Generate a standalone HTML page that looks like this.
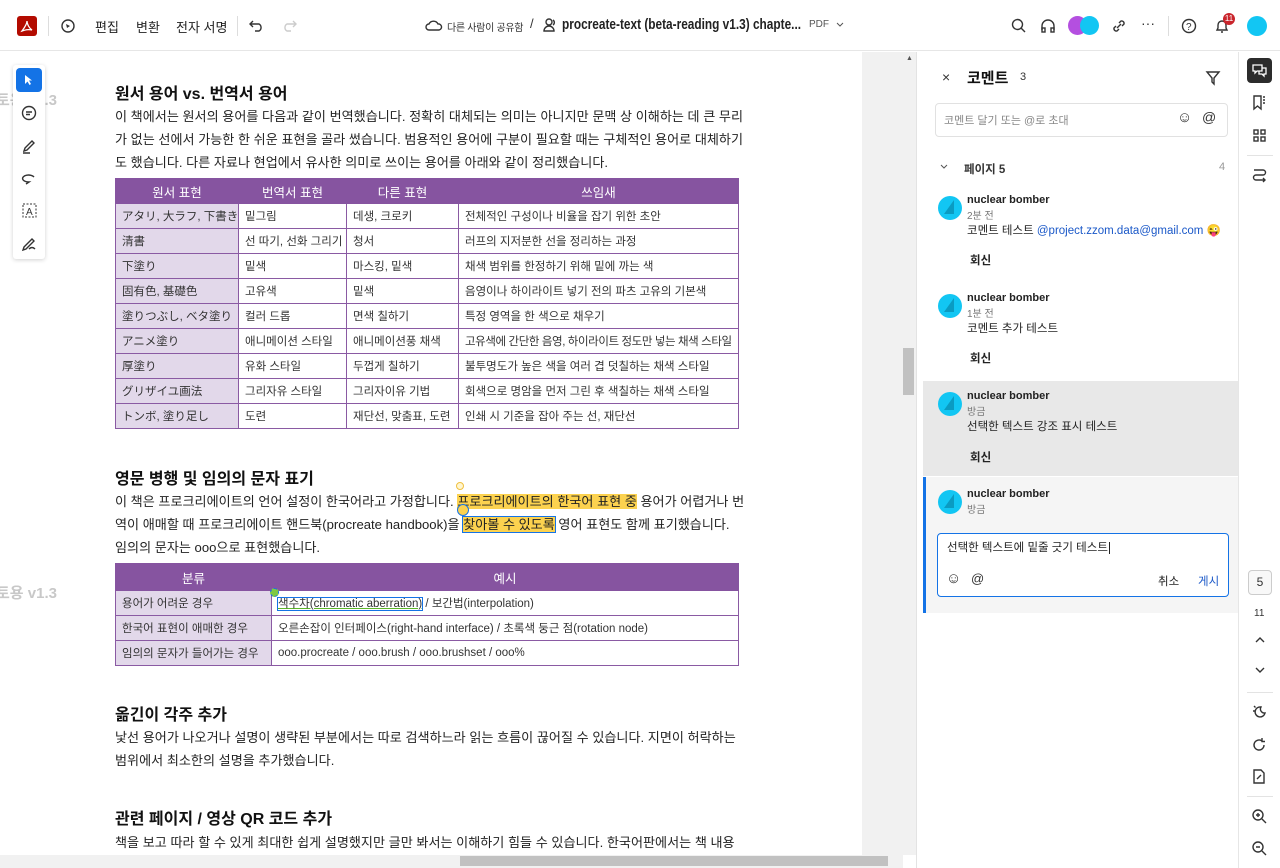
<!DOCTYPE html>
<html><head><meta charset="utf-8">
<style>
*{margin:0;padding:0;box-sizing:border-box}
body{width:1280px;height:868px;overflow:hidden;background:#fff;font-family:"Liberation Sans","Noto Sans CJK KR",sans-serif;color:#222;position:relative}
.a{position:absolute}
.top{left:0;top:0;width:1280px;height:51px;border-bottom:1px solid #e6e6e6;background:#fff}
.tb{font-size:13px;color:#222;top:17px}
p.t{position:absolute;left:115px;width:625px;font-size:13.1px;line-height:23px;color:#222;white-space:nowrap}
h2{position:absolute;left:115px;font-size:16px;font-weight:bold;color:#111}
table{position:absolute;border-collapse:collapse;font-size:11.5px;color:#333;table-layout:fixed}
td,th{border:1px solid #8a5aa3;height:25px;padding:0 6px;white-space:nowrap;overflow:hidden}
th{background:#8654a0;color:#fff;font-weight:normal;font-size:12.5px;text-align:center;border-color:#8654a0}
td.f{background:#e2d8ea}
.hl{background:#fcd24f}
.wm{color:#c8c8c8;font-weight:bold;font-size:15px}
.ic{stroke:#333;fill:none;stroke-width:1.4}
.panel{left:916px;top:52px;width:322px;height:816px;background:#fff;border-left:1px solid #e3e3e3}
.name{font-size:11px;font-weight:bold;color:#222}
.time{font-size:10px;color:#777}
.ct{font-size:11.5px;color:#222}
.av{width:24px;height:24px;border-radius:50%;background:#12c6f3;overflow:hidden}
.av:after{content:"";position:absolute;left:6px;top:4px;border-left:10px solid transparent;border-bottom:14px solid #0a9bc2}
.rep{font-size:11.5px;font-weight:bold;color:#222}
</style></head><body>

<div class="a top"></div>
<div class="a" style="left:17px;top:16px;width:20px;height:20px;background:#b30b00;border-radius:3px"></div>
<svg class="a" style="left:20px;top:19px" width="14" height="14"><path d="M2 12 C5 8 7 4 7 2 C7 5 9 9 12 11 C8 10 5 11 2 12Z" fill="none" stroke="#fff" stroke-width="1.3"/></svg>
<div class="a" style="left:48px;top:16px;width:1px;height:20px;background:#ddd"></div>
<svg class="a" style="left:60px;top:18px" width="16" height="16"><circle cx="8" cy="8" r="6" class="ic"/><path d="M6 6 L10 8 L7 10Z" fill="#333"/></svg>
<div class="a tb" style="left:95px">편집</div>
<div class="a tb" style="left:136px">변환</div>
<div class="a tb" style="left:176px">전자 서명</div>
<div class="a" style="left:237px;top:16px;width:1px;height:20px;background:#ddd"></div>
<svg class="a" style="left:249px;top:18px" width="16" height="14"><path d="M4 3 L1 6 L4 9 M1 6 H10 A4 4 0 0 1 10 13 H6" class="ic"/></svg>
<svg class="a" style="left:281px;top:18px" width="16" height="14"><path d="M12 3 L15 6 L12 9 M15 6 H6 A4 4 0 0 0 6 13 H10" stroke="#ccc" fill="none" stroke-width="1.4"/></svg>
<svg class="a" style="left:425px;top:18px" width="18" height="14"><path d="M4 12 H14 A3 3 0 0 0 13 6 A5 5 0 0 0 4 6 A3 3 0 0 0 4 12Z" class="ic"/></svg>
<div class="a" style="left:447px;top:19px;font-size:10px;color:#333;letter-spacing:-0.3px">다른 사람이 공유함</div>
<div class="a" style="left:530px;top:16px;font-size:13px;color:#333">/</div>
<svg class="a" style="left:542px;top:17px" width="16" height="16"><circle cx="7" cy="5" r="3" class="ic"/><path d="M2 14 A5 5 0 0 1 12 14Z" class="ic"/><path d="M11 3 A3 3 0 0 1 11 8" class="ic"/></svg>
<div class="a" style="left:562px;top:16px;font-size:15px;font-weight:bold;color:#222;transform:scaleX(0.79);transform-origin:left;white-space:nowrap">procreate-text (beta-reading v1.3) chapte...</div>
<div class="a" style="left:809px;top:19px;font-size:10px;color:#555">PDF</div>
<svg class="a" style="left:835px;top:21px" width="10" height="8"><path d="M2 2 L5 5 L8 2" stroke="#555" fill="none"/></svg>
<svg class="a" style="left:1011px;top:18px" width="16" height="16"><circle cx="6.5" cy="6.5" r="5" class="ic"/><path d="M10 10 L14 14" class="ic"/></svg>
<svg class="a" style="left:1040px;top:18px" width="16" height="16"><path d="M2 12 V8 A6 6 0 0 1 14 8 V12" class="ic"/><rect x="2" y="10" width="3" height="4" class="ic"/><rect x="11" y="10" width="3" height="4" class="ic"/></svg>
<div class="a" style="left:1068px;top:16px;width:19px;height:19px;border-radius:50%;background:#b44fe0"></div>
<div class="a" style="left:1080px;top:16px;width:19px;height:19px;border-radius:50%;background:#12c6f3"></div>
<svg class="a" style="left:1111px;top:18px" width="16" height="16"><path d="M6 10 L10 6 M5 8 L3 10 A2.5 2.5 0 0 0 6 13 L8 11 M8 5 L10 3 A2.5 2.5 0 0 1 13 6 L11 8" class="ic"/></svg>
<div class="a" style="left:1141px;top:15px;font-size:14px;color:#333">···</div>
<div class="a" style="left:1168px;top:16px;width:1px;height:20px;background:#ddd"></div>
<svg class="a" style="left:1181px;top:18px" width="16" height="16"><circle cx="8" cy="8" r="6.5" class="ic"/><text x="5" y="12" font-size="10" fill="#333" font-family="Liberation Sans">?</text></svg>
<svg class="a" style="left:1214px;top:18px" width="16" height="16"><path d="M3 12 H13 L12 10 V7 A4 4 0 0 0 4 7 V10Z M7 14 H9" class="ic"/></svg>
<div class="a" style="left:1223px;top:13px;width:12px;height:12px;border-radius:50%;background:#c9252c;color:#fff;font-size:8px;text-align:center;line-height:12px">11</div>
<div class="a" style="left:1247px;top:16px;width:20px;height:20px;border-radius:50%;background:#12c6f3"></div>

<div class="a" style="left:862px;top:52px;width:54px;height:803px;background:#f1f1f1"></div>
<div class="a" style="left:903px;top:52px;width:13px;height:803px;background:#f1f1f1"></div>
<div class="a" style="left:903px;top:348px;width:11px;height:47px;background:#c1c1c1"></div>
<div class="a" style="left:906px;top:55px;font-size:7px;color:#555">▲</div>
<div class="a" style="left:0;top:855px;width:903px;height:13px;background:#f1f1f1"></div>
<div class="a" style="left:460px;top:856px;width:428px;height:10px;background:#c1c1c1"></div>
<div class="a" style="left:917px;top:448px;width:3px;height:22px;background:#555"></div>

<div class="a wm" style="left:-4px;top:89px">토용 v1.3</div>
<div class="a wm" style="left:-4px;top:582px">토용 v1.3</div>

<div class="a" style="left:13px;top:65px;width:32px;height:194px;background:#fff;box-shadow:0 1px 4px rgba(0,0,0,.18);border-radius:3px"></div>
<div class="a" style="left:16px;top:68px;width:26px;height:24px;background:#1473e6;border-radius:4px"></div>
<svg class="a" style="left:22px;top:73px" width="14" height="14"><path d="M3 2 L3 11 L5.5 8.5 L7.5 12 L9 11 L7 7.5 L10 7.5Z" fill="#fff"/></svg>
<svg class="a" style="left:20px;top:104px" width="20" height="20"><circle cx="9" cy="9" r="6.5" class="ic"/><path d="M6 8 H12 M6 10.5 H10" class="ic"/></svg>
<svg class="a" style="left:20px;top:137px" width="20" height="20"><path d="M4 14 L5 11 L12 4 L14 6 L7 13Z M3 16 H10" class="ic"/></svg>
<svg class="a" style="left:20px;top:170px" width="20" height="20"><path d="M14 7 A6 3.5 0 1 0 9 12 L6 14" class="ic"/></svg>
<svg class="a" style="left:20px;top:201px" width="20" height="20"><rect x="3" y="3" width="13" height="13" stroke="#333" fill="none" stroke-dasharray="2 1.5"/><text x="6" y="14" font-size="10" fill="#333" font-family="Liberation Sans">A</text></svg>
<svg class="a" style="left:20px;top:234px" width="20" height="20"><path d="M4 13 L12 5 L14 7 L6 15 L3 16Z M9 15 Q12 12 15 15" class="ic"/></svg>

<h2 style="top:80px">원서 용어 vs. 번역서 용어</h2>
<p class="t" style="top:105px">이 책에서는 원서의 용어를 다음과 같이 번역했습니다. 정확히 대체되는 의미는 아니지만 문맥 상 이해하는 데 큰 무리<br>가 없는 선에서 가능한 한 쉬운 표현을 골라 썼습니다. 범용적인 용어에 구분이 필요할 때는 구체적인 용어로 대체하기<br>도 했습니다. 다른 자료나 현업에서 유사한 의미로 쓰이는 용어를 아래와 같이 정리했습니다.</p>

<table style="left:115px;top:178px;width:623px">
<colgroup><col style="width:123px"><col style="width:108px"><col style="width:112px"><col style="width:280px"></colgroup>
<tr><th>원서 표현</th><th>번역서 표현</th><th>다른 표현</th><th>쓰임새</th></tr>
<tr><td class="f">アタリ, 大ラフ, 下書き</td><td>밑그림</td><td>데생, 크로키</td><td>전체적인 구성이나 비율을 잡기 위한 초안</td></tr>
<tr><td class="f">清書</td><td>선 따기, 선화 그리기</td><td>청서</td><td>러프의 지저분한 선을 정리하는 과정</td></tr>
<tr><td class="f">下塗り</td><td>밑색</td><td>마스킹, 밑색</td><td>채색 범위를 한정하기 위해 밑에 까는 색</td></tr>
<tr><td class="f">固有色, 基礎色</td><td>고유색</td><td>밑색</td><td>음영이나 하이라이트 넣기 전의 파츠 고유의 기본색</td></tr>
<tr><td class="f">塗りつぶし, ベタ塗り</td><td>컬러 드롭</td><td>면색 칠하기</td><td>특정 영역을 한 색으로 채우기</td></tr>
<tr><td class="f">アニメ塗り</td><td>애니메이션 스타일</td><td>애니메이션풍 채색</td><td style="letter-spacing:-0.4px">고유색에 간단한 음영, 하이라이트 정도만 넣는 채색 스타일</td></tr>
<tr><td class="f">厚塗り</td><td>유화 스타일</td><td>두껍게 칠하기</td><td>불투명도가 높은 색을 여러 겹 덧칠하는 채색 스타일</td></tr>
<tr><td class="f">グリザイユ画法</td><td>그리자유 스타일</td><td>그리자이유 기법</td><td>회색으로 명암을 먼저 그린 후 색칠하는 채색 스타일</td></tr>
<tr><td class="f">トンボ, 塗り足し</td><td>도련</td><td>재단선, 맞춤표, 도련</td><td>인쇄 시 기준을 잡아 주는 선, 재단선</td></tr>
</table>

<h2 style="top:465px">영문 병행 및 임의의 문자 표기</h2>
<p class="t" style="top:490px">이 책은 프로크리에이트의 언어 설정이 한국어라고 가정합니다. <span class="hl">프로크리에이트의 한국어 표현 중</span> 용어가 어렵거나 번<br>역이 애매할 때 프로크리에이트 핸드북(procreate handbook)을 <span class="hl" style="outline:1.5px solid #1473e6">찾아볼 수 있도록</span> 영어 표현도 함께 표기했습니다.<br>임의의 문자는 ooo으로 표현했습니다.</p>
<div class="a" style="left:456px;top:482px;width:8px;height:8px;border-radius:50%;border:1.5px solid #f0c040;background:#fff6d0"></div>
<div class="a" style="left:457px;top:504px;width:12px;height:12px;border-radius:50%;border:1.5px solid #1473e6;background:#fcd24f"></div>

<table style="left:115px;top:563px;width:623px">
<colgroup><col style="width:156px"><col style="width:467px"></colgroup>
<tr><th style="height:27px">분류</th><th>예시</th></tr>
<tr><td class="f">용어가 어려운 경우</td><td><span style="outline:1.5px solid #1473e6;text-decoration:underline;text-decoration-color:#5cb82a">색수차(chromatic aberration)</span> / 보간법(interpolation)</td></tr>
<tr><td class="f">한국어 표현이 애매한 경우</td><td>오른손잡이 인터페이스(right-hand interface) / 초록색 둥근 점(rotation node)</td></tr>
<tr><td class="f">임의의 문자가 들어가는 경우</td><td>ooo.procreate / ooo.brush / ooo.brushset / ooo%</td></tr>
</table>
<div class="a" style="left:270px;top:588px;width:9px;height:9px;border-radius:50%;background:#7fc943;border:1px dashed #1473e6"></div>

<h2 style="top:701px">옮긴이 각주 추가</h2>
<p class="t" style="top:726px">낯선 용어가 나오거나 설명이 생략된 부분에서는 따로 검색하느라 읽는 흐름이 끊어질 수 있습니다. 지면이 허락하는<br>범위에서 최소한의 설명을 추가했습니다.</p>
<h2 style="top:805px">관련 페이지 / 영상 QR 코드 추가</h2>
<p class="t" style="top:831px">책을 보고 따라 할 수 있게 최대한 쉽게 설명했지만 글만 봐서는 이해하기 힘들 수 있습니다. 한국어판에서는 책 내용</p>

<div class="a panel"></div>
<div class="a" style="left:942px;top:69px;font-size:14px;color:#333">×</div>
<div class="a" style="left:967px;top:67px;font-size:15px;font-weight:bold;color:#111">코멘트</div>
<div class="a" style="left:1020px;top:71px;font-size:11px;color:#333">3</div>
<svg class="a" style="left:1205px;top:70px" width="16" height="16"><path d="M2 2 H14 L9 8 V14 L7 12 V8Z" class="ic"/></svg>
<div class="a" style="left:935px;top:103px;width:293px;height:34px;border:1px solid #e1e1e1;border-radius:4px"></div>
<div class="a" style="left:944px;top:112px;font-size:11px;color:#888">코멘트 달기 또는 @로 초대</div>
<div class="a" style="left:1177px;top:109px;font-size:15px;color:#333">☺</div>
<div class="a" style="left:1202px;top:109px;font-size:14px;color:#333">@</div>
<svg class="a" style="left:939px;top:163px" width="10" height="8"><path d="M2 2 L5 5 L8 2" stroke="#555" fill="none"/></svg>
<div class="a" style="left:964px;top:161px;font-size:11.5px;font-weight:bold;color:#333">페이지 5</div>
<div class="a" style="left:1219px;top:161px;font-size:11px;color:#999">4</div>

<div class="a av" style="left:938px;top:196px"></div>
<div class="a name" style="left:967px;top:194px">nuclear bomber</div>
<div class="a time" style="left:967px;top:207px">2분 전</div>
<div class="a ct" style="left:967px;top:222px">코멘트 테스트 <span style="color:#1a58c8">@project.zzom.data@gmail.com</span> 😜</div>
<div class="a rep" style="left:970px;top:252px">회신</div>

<div class="a av" style="left:938px;top:294px"></div>
<div class="a name" style="left:967px;top:292px">nuclear bomber</div>
<div class="a time" style="left:967px;top:305px">1분 전</div>
<div class="a ct" style="left:967px;top:320px">코멘트 추가 테스트</div>
<div class="a rep" style="left:970px;top:350px">회신</div>

<div class="a" style="left:923px;top:381px;width:315px;height:95px;background:#e8e8e8"></div>
<div class="a av" style="left:938px;top:392px"></div>
<div class="a name" style="left:967px;top:390px">nuclear bomber</div>
<div class="a time" style="left:967px;top:403px">방금</div>
<div class="a ct" style="left:967px;top:418px">선택한 텍스트 강조 표시 테스트</div>
<div class="a rep" style="left:970px;top:449px">회신</div>

<div class="a" style="left:923px;top:477px;width:315px;height:136px;background:#f5f5f5;border-left:3px solid #1473e6"></div>
<div class="a av" style="left:938px;top:490px"></div>
<div class="a name" style="left:967px;top:488px">nuclear bomber</div>
<div class="a time" style="left:967px;top:501px">방금</div>
<div class="a" style="left:937px;top:533px;width:292px;height:64px;background:#fff;border:1px solid #1473e6;border-radius:4px"></div>
<div class="a ct" style="left:947px;top:539px">선택한 텍스트에 밑줄 긋기 테스트<span style="border-left:1px solid #222;margin-left:1px"></span></div>
<div class="a" style="left:946px;top:570px;font-size:15px;color:#333">☺</div>
<div class="a" style="left:971px;top:571px;font-size:13px;color:#333">@</div>
<div class="a" style="left:1158px;top:573px;font-size:11.5px;color:#222">취소</div>
<div class="a" style="left:1198px;top:573px;font-size:11.5px;color:#1a58c8">게시</div>

<div class="a" style="left:1238px;top:52px;width:42px;height:816px;background:#fff;border-left:1px solid #e6e6e6"></div>
<div class="a" style="left:1247px;top:58px;width:25px;height:25px;background:#2c2c2c;border-radius:4px"></div>
<svg class="a" style="left:1251px;top:62px" width="17" height="17"><path d="M2 3 H11 V9 H6 L4 11 V9 H2Z M11 6 H15 V12 H13 V14 L11 12 H8 V9" stroke="#fff" fill="none" stroke-width="1.3"/></svg>
<svg class="a" style="left:1251px;top:94px" width="17" height="17"><path d="M3 2 H10 V15 L6.5 12 L3 15Z M12 3 H14 M12 6 H14 M12 9 H14" class="ic"/></svg>
<svg class="a" style="left:1251px;top:127px" width="17" height="17"><rect x="3" y="3" width="4" height="4" class="ic"/><rect x="10" y="3" width="4" height="4" class="ic"/><rect x="3" y="10" width="4" height="4" class="ic"/><rect x="10" y="10" width="4" height="4" class="ic"/></svg>
<div class="a" style="left:1247px;top:155px;width:26px;height:1px;background:#e3e3e3"></div>
<svg class="a" style="left:1251px;top:166px" width="17" height="17"><path d="M3 4 H12 A2.5 2.5 0 0 1 12 9 H5 A2.5 2.5 0 0 0 5 14 H14 M12 12 L14 14 L12 16" class="ic"/></svg>
<div class="a" style="left:1248px;top:570px;width:24px;height:25px;border:1px solid #ccc;border-radius:4px;background:#f8f8f8;font-size:12px;text-align:center;line-height:23px;color:#333">5</div>
<div class="a" style="left:1254px;top:608px;font-size:10px;color:#333">11</div>
<svg class="a" style="left:1254px;top:635px" width="12" height="10"><path d="M2 7 L6 3 L10 7" class="ic"/></svg>
<svg class="a" style="left:1254px;top:666px" width="12" height="10"><path d="M2 2 L6 6 L10 2" class="ic"/></svg>
<div class="a" style="left:1247px;top:692px;width:26px;height:1px;background:#e3e3e3"></div>
<svg class="a" style="left:1251px;top:703px" width="18" height="18"><path d="M10 4 A5 5 0 1 0 14 10 A4 4 0 0 1 10 4Z" class="ic"/><path d="M2 8 H4 M3 3 L4.5 4.5" class="ic"/></svg>
<svg class="a" style="left:1251px;top:737px" width="17" height="17"><path d="M13 8 A5 5 0 1 1 11 4 M11 1 V4.5 H14" class="ic"/></svg>
<svg class="a" style="left:1251px;top:768px" width="17" height="17"><path d="M3 2 H10 L13 5 V15 H3Z M6 11 L10 7" class="ic"/></svg>
<div class="a" style="left:1247px;top:796px;width:26px;height:1px;background:#e3e3e3"></div>
<svg class="a" style="left:1251px;top:808px" width="17" height="17"><circle cx="7" cy="7" r="5" class="ic"/><path d="M11 11 L15 15 M5 7 H9 M7 5 V9" class="ic"/></svg>
<svg class="a" style="left:1251px;top:840px" width="17" height="17"><circle cx="7" cy="7" r="5" class="ic"/><path d="M11 11 L15 15 M5 7 H9" class="ic"/></svg>
</body></html>
